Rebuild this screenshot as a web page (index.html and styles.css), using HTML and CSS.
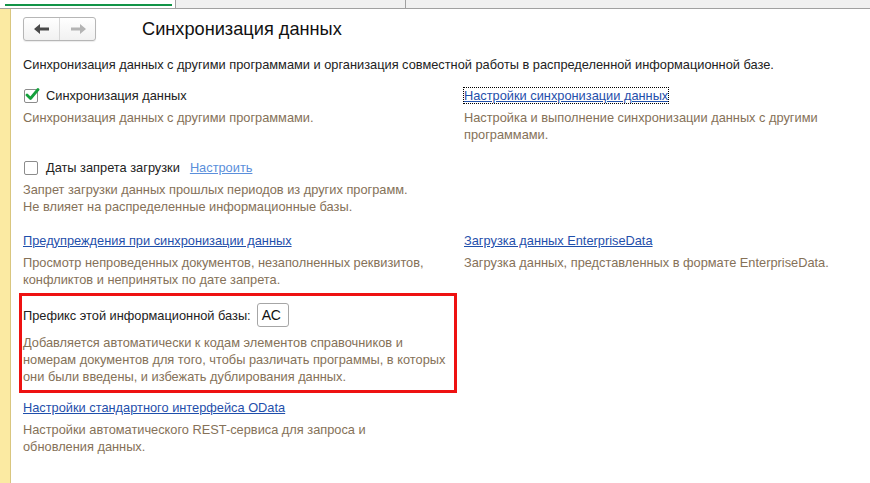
FILE: index.html
```html
<!DOCTYPE html>
<html lang="ru">
<head>
<meta charset="utf-8">
<title>Синхронизация данных</title>
<link rel="stylesheet" href="styles.css">
</head>
<body>
<div class="tabs">
  <div class="tab tab-active"><span class="tab-line"></span></div>
  <div class="tab tab-second"></div>
  <div class="tab tab-rest"></div>
</div>
<div class="main">
  <div class="strip"></div>
  <div class="content">
    <div class="header">
      <div class="nav">
        <span class="nav-btn">
          <svg width="16" height="10" viewBox="0 0 16 10"><path d="M0 5 L6 0 L6 3.5 L15 3.5 L15 6.5 L6 6.5 L6 10 Z" fill="#4a4a4a"/></svg>
        </span>
        <span class="nav-btn">
          <svg width="16" height="10" viewBox="0 0 16 10"><path d="M16 5 L10 0 L10 3.5 L1 3.5 L1 6.5 L10 6.5 L10 10 Z" fill="#b4b4b4"/></svg>
        </span>
      </div>
      <h1 class="title">Синхронизация данных</h1>
    </div>
    <p class="intro">Синхронизация данных с другими программами и организация совместной работы в распределенной информационной базе.</p>

    <div class="row row-first">
      <div class="item">
        <label class="check-row">
          <span class="checkbox">
            <svg width="15" height="13" viewBox="0 0 15 13"><path d="M2 7 L5.5 10.5 L13 1.5" fill="none" stroke="#14a03c" stroke-width="2.8" stroke-linecap="round" stroke-linejoin="round"/></svg>
          </span>
          <span>Синхронизация данных</span>
        </label>
        <p class="desc">Синхронизация данных с другими программами.</p>
      </div>
      <div class="item">
        <a class="link focused" href="#">Настройки синхронизации данных</a>
        <p class="desc">Настройка и выполнение синхронизации данных с другими программами.</p>
      </div>
    </div>

    <div class="row row-gap">
      <div class="item">
        <label class="check-row">
          <span class="checkbox"></span>
          <span>Даты запрета загрузки</span>
          <a class="link link-light" href="#">Настроить</a>
        </label>
        <p class="desc">Запрет загрузки данных прошлых периодов из других программ.<br>Не влияет на распределенные информационные базы.</p>
      </div>
      <div class="item"></div>
    </div>

    <div class="row row-gap2">
      <div class="item">
        <a class="link" href="#">Предупреждения при синхронизации данных</a>
        <p class="desc">Просмотр непроведенных документов, незаполненных реквизитов, конфликтов и непринятых по дате запрета.</p>
      </div>
      <div class="item">
        <a class="link" href="#">Загрузка данных EnterpriseData</a>
        <p class="desc">Загрузка данных, представленных в формате EnterpriseData.</p>
      </div>
    </div>

    <div class="row">
      <div class="prefix-box">
        <div class="prefix-row">
          <span>Префикс этой информационной базы:</span>
          <span class="prefix-input">АС</span>
        </div>
        <p class="desc desc-box">Добавляется автоматически к кодам элементов справочников и номерам документов для того, чтобы различать программы, в которых они были введены, и избежать дублирования данных.</p>
      </div>
    </div>

    <div class="row row-odata">
      <div class="item">
        <a class="link" href="#">Настройки стандартного интерфейса OData</a>
        <p class="desc desc-narrow">Настройки автоматического REST-сервиса для запроса и обновления данных.</p>
      </div>
    </div>
  </div>
</div>
</body>
</html>
```

FILE: styles.css
```css
html, body {
  margin: 0;
  padding: 0;
  height: 100%;
  background: #ffffff;
  font-family: "Liberation Sans", Arial, sans-serif;
  font-size: 12.8px;
  line-height: 17px;
  color: #222222;
}

.tabs {
  display: flex;
  height: 8px;
  border-bottom: 1px solid #a0a0a0;
}
.tab {
  height: 8px;
}
.tab-active {
  width: 176px;
  background: #ffffff;
  border-right: 1px solid #a0a0a0;
  display: flex;
  align-items: flex-start;
  padding: 4px 3px 0 5px;
  box-sizing: border-box;
}
.tab-line {
  display: block;
  flex: 1;
  height: 2px;
  background: #129447;
}
.tab-second {
  width: 229px;
  background: #f0f0f0;
  border-right: 1px solid #a0a0a0;
}
.tab-rest {
  flex: 1;
  background: #f0f0f0;
}

.main {
  display: flex;
  min-height: calc(100% - 9px);
}
.strip {
  width: 10px;
  background: #fbeaa2;
  border-right: 1px solid #d9c67f;
  flex-shrink: 0;
}
.content {
  flex: 1;
  padding: 8px 0 0 12px;
}

.header {
  display: flex;
  align-items: center;
  height: 24px;
}
.nav {
  display: flex;
  width: 73px;
  height: 24px;
  box-sizing: border-box;
  border: 1px solid #b6b6b6;
  border-radius: 3px;
  background: linear-gradient(#ffffff, #f1f1f1);
  box-shadow: 0 1px 1px rgba(0,0,0,0.08);
}
.nav-btn {
  flex: 1;
  display: flex;
  align-items: center;
  justify-content: center;
}
.nav-btn + .nav-btn {
  border-left: 1px solid #d6d6d6;
}
.title {
  margin: 0 0 0 46px;
  font-size: 18.2px;
  font-weight: normal;
  line-height: 24px;
  color: #111111;
}

.intro {
  margin: 15px 0 0 0;
  color: #222222;
}

.row {
  display: grid;
  grid-template-columns: 441px 1fr;
}
.row-first { margin-top: 14px; }
.row-gap { margin-top: 16px; }
.row-gap2 { margin-top: 17px; }
.row-odata { margin-top: 6px; }

.item { min-width: 0; }

.check-row {
  display: flex;
  align-items: center;
  height: 17px;
  color: #222222;
}
.checkbox {
  width: 14px;
  height: 14px;
  box-sizing: border-box;
  border: 1px solid #8c8c8c;
  border-radius: 2px;
  background: #ffffff;
  margin: 0 8px 0 1px;
  position: relative;
}
.checkbox svg {
  position: absolute;
  left: 0;
  top: -2px;
}

.link {
  color: #1f4fab;
  text-decoration: underline;
}
.link-light {
  color: #5b8fdb;
  margin-left: 10px;
}
.focused {
  outline: 1px dotted #000000;
  outline-offset: 0;
}

.desc {
  margin: 5px 0 0 0;
  color: #857158;
}
.item .desc { max-width: 430px; }
.item .desc-narrow { max-width: 360px; }

.prefix-box {
  grid-column: 1 / 2;
  margin: 5px 0 0 -4px;
  width: 438px;
  box-sizing: border-box;
  border: 3px solid #ee1111;
  padding: 7px 2px 5px 1px;
}
.prefix-row {
  display: flex;
  align-items: center;
  height: 24px;
  color: #222222;
}
.prefix-input {
  margin-left: 6px;
  width: 32px;
  height: 24px;
  box-sizing: border-box;
  border: 1px solid #a6a6a6;
  border-radius: 3px;
  padding-left: 4px;
  font-size: 14px;
  line-height: 22px;
  color: #111111;
}
.desc-box {
  margin-top: 7px;
}
```
